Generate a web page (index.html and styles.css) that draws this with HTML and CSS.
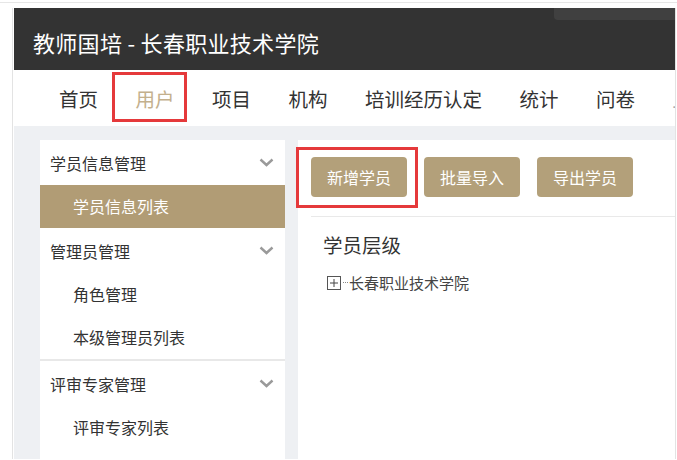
FILE: index.html
```html
<!DOCTYPE html>
<html>
    <head>
        <meta name="viewport" content="width=device-width, initial-scale=1" />
        <meta http-equiv="content-type" content="text/html; charset=utf-8" />
        <title>教师国培 | 用户</title>
        <link rel="stylesheet" href="styles.css">
    </head>
    <body>
        <div class="topbar"></div>
        <div class="frame">
            <div class="header">
                <h1>教师国培 - 长春职业技术学院</h1>
                <span class="header-tab"></span>
            </div>
            <div class="nav">
                <a href="#">首页</a>
                <a href="#" class="active">用户<span class="mark mark-nav"></span></a>
                <a href="#">项目</a>
                <a href="#">机构</a>
                <a href="#">培训经历认定</a>
                <a href="#">统计</a>
                <a href="#">问卷</a>
                <a href="#" class="more">.</a>
            </div>
            <div class="main">
                <div class="side">
                    <div class="group">
                        <div class="group-title">学员信息管理
                            <svg width="15" height="9" viewBox="0 0 15 9"><polyline points="1.5,1.5 7.5,7 13.5,1.5" fill="none" stroke="#9a9a9a" stroke-width="2.4"/></svg>
                        </div>
                        <a href="#" class="item active">学员信息列表</a>
                    </div>
                    <div class="group">
                        <div class="group-title">管理员管理
                            <svg width="15" height="9" viewBox="0 0 15 9"><polyline points="1.5,1.5 7.5,7 13.5,1.5" fill="none" stroke="#9a9a9a" stroke-width="2.4"/></svg>
                        </div>
                        <a href="#" class="item">角色管理</a>
                        <a href="#" class="item">本级管理员列表</a>
                    </div>
                    <div class="group sep">
                        <div class="group-title">评审专家管理
                            <svg width="15" height="9" viewBox="0 0 15 9"><polyline points="1.5,1.5 7.5,7 13.5,1.5" fill="none" stroke="#9a9a9a" stroke-width="2.4"/></svg>
                        </div>
                        <a href="#" class="item">评审专家列表</a>
                    </div>
                </div>
                <div class="panel">
                    <div class="toolbar">
                        <a href="#" class="btn">新增学员<span class="mark mark-btn"></span></a>
                        <a href="#" class="btn">批量导入</a>
                        <a href="#" class="btn">导出学员</a>
                    </div>
                    <div class="tree-box">
                        <h3>学员层级</h3>
                        <div class="tree-node">
                            <svg width="14" height="14" viewBox="0 0 14 14"><rect x="0.5" y="0.5" width="13" height="13" fill="#fff" stroke="#555"/><line x1="3" y1="7" x2="11" y2="7" stroke="#444"/><line x1="7" y1="3" x2="7" y2="11" stroke="#444"/></svg>
                            <span class="dots"></span>长春职业技术学院
                        </div>
                    </div>
                </div>
            </div>
        </div>
    </body>
</html>
```

FILE: styles.css
```css
*{
    box-sizing: border-box;
    padding: 0;
    margin: 0;
}
body{
    width: 677px;
    height: 460px;
    overflow: hidden;
    background: #fff;
    color: #333;
    font-family: "Noto Sans CJK SC", "Noto Sans", sans-serif;
}
a{
    text-decoration: none;
    color: inherit;
}
.topbar{
    height: 3px;
    border-bottom: 1px solid #e6e6e6;
}
.frame{
    margin: 5px 1px 0 12px;
    padding-left: 1px;
    border-left: 1px solid #e3e3e3;
    border-right: 1px solid #e3e3e3;
}
.header{
    position: relative;
    height: 62px;
    background: #333;
    display: flex;
    align-items: center;
    padding: 6px 0 0 19px;
}
.header h1{
    color: #fff;
    font-size: 22px;
    font-weight: normal;
    letter-spacing: 0.3px;
}
.header-tab{
    position: absolute;
    top: 0;
    right: 0;
    width: 121px;
    height: 12px;
    background: #404040;
    border-bottom-left-radius: 4px;
}
.nav{
    height: 56px;
    background: #fff;
    display: flex;
    gap: 37.5px;
    padding-left: 45px;
    font-size: 19.5px;
    white-space: nowrap;
    overflow: hidden;
}
.nav a{
    position: relative;
    display: flex;
    align-items: center;
    height: 56px;
    color: #333;
}
.nav .active{
    color: #c3b08d;
}
.nav .more{
    color: #999;
    font-size: 12px;
    padding-top: 8px;
}
.mark{
    position: absolute;
    border: 3px solid #e5393b;
}
.mark-nav{
    left: -24px;
    top: 2px;
    width: 75px;
    height: 50px;
}
.main{
    height: 333px;
    overflow: hidden;
    background: #eef0f3;
    display: flex;
    gap: 13px;
    padding: 14px 0 0 26px;
}
.side{
    width: 245px;
    background: #fff;
    font-size: 16px;
}
.group.sep{
    border-top: 2px solid #e8e8e8;
}
.group-title{
    height: 45px;
    display: flex;
    justify-content: space-between;
    align-items: center;
    padding: 0 11px 0 10px;
}
.item{
    display: block;
    height: 43px;
    line-height: 43px;
    padding-left: 33px;
}
.item.active{
    background: #b19c75;
    color: #fff;
}
.panel{
    flex: 1;
    background: #fff;
    padding: 17px 0 0 13px;
}
.toolbar{
    display: flex;
    gap: 17px;
    padding-bottom: 19px;
    border-bottom: 1px solid #e9e9e9;
}
.btn{
    position: relative;
    width: 96px;
    height: 40px;
    line-height: 40px;
    text-align: center;
    background: #b3a07a;
    color: #fff;
    font-size: 16px;
    border-radius: 4px;
}
.mark-btn{
    left: -15px;
    top: -10px;
    width: 122px;
    height: 61px;
}
.tree-box{
    padding: 15px 0 0 12px;
}
.tree-box h3{
    font-size: 19.5px;
    font-weight: normal;
    line-height: 26px;
}
.tree-node{
    display: flex;
    align-items: center;
    margin-top: 14px;
    padding-left: 4px;
    font-size: 15px;
    color: #444;
}
.dots{
    width: 5px;
    margin: 0 1px 0 2px;
    border-top: 1px dotted #888;
}
```
